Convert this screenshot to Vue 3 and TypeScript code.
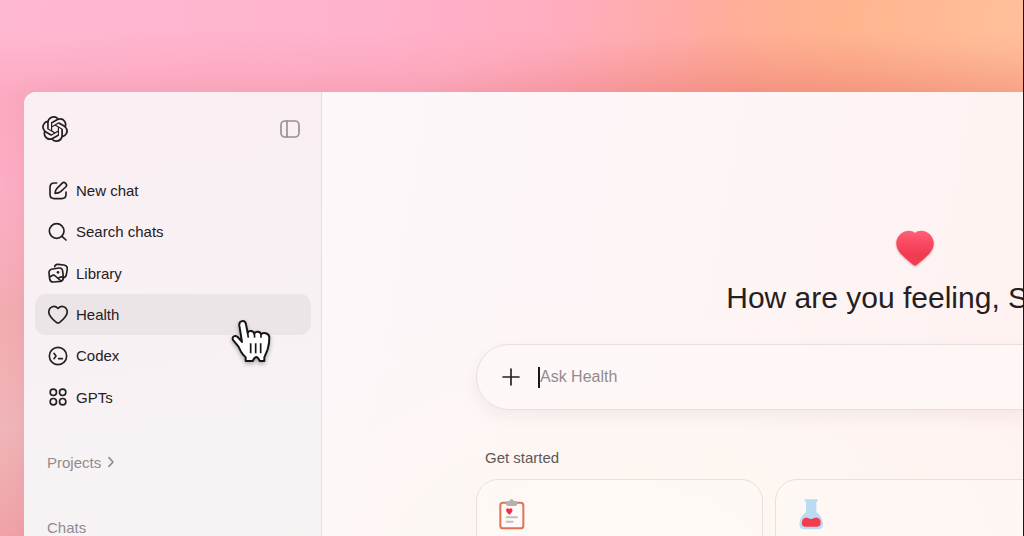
<script setup lang="ts">
import { ref } from 'vue'

type IconName = 'edit' | 'search' | 'library' | 'heart' | 'codex' | 'gpts'

interface NavItem {
  label: string
  icon: IconName
}

const navItems: NavItem[] = [
  { label: 'New chat', icon: 'edit' },
  { label: 'Search chats', icon: 'search' },
  { label: 'Library', icon: 'library' },
  { label: 'Health', icon: 'heart' },
  { label: 'Codex', icon: 'codex' },
  { label: 'GPTs', icon: 'gpts' },
]

const active = ref<string>('Health')
const question = ref<string>('')
</script>

<template>
  <div class="backdrop">
    <div class="window">
      <aside class="sidebar">
        <header class="sidebar-head">
          <a href="#" class="logo" aria-label="Home">
            <svg viewBox="0 0 24 24" width="26" height="26" fill="currentColor">
              <path d="M22.2819 9.8211a5.9847 5.9847 0 0 0-.5157-4.9108 6.0462 6.0462 0 0 0-6.5098-2.9A6.0651 6.0651 0 0 0 4.9807 4.1818a5.9847 5.9847 0 0 0-3.9977 2.9 6.0462 6.0462 0 0 0 .7427 7.0966 5.98 5.98 0 0 0 .511 4.9107 6.051 6.051 0 0 0 6.5146 2.9001A5.9847 5.9847 0 0 0 13.2599 24a6.0557 6.0557 0 0 0 5.7718-4.2058 5.9894 5.9894 0 0 0 3.9977-2.9001 6.0557 6.0557 0 0 0-.7475-7.0729zm-9.022 12.6081a4.4755 4.4755 0 0 1-2.8764-1.0408l.1419-.0804 4.7783-2.7582a.7948.7948 0 0 0 .3927-.6813v-6.7369l2.02 1.1686a.071.071 0 0 1 .038.052v5.5826a4.504 4.504 0 0 1-4.4945 4.4944zm-9.6607-4.1254a4.4708 4.4708 0 0 1-.5346-3.0137l.142.0852 4.783 2.7582a.7712.7712 0 0 0 .7806 0l5.8428-3.3685v2.3324a.0804.0804 0 0 1-.0332.0615L9.74 19.9502a4.4992 4.4992 0 0 1-6.1408-1.6464zM2.3408 7.8956a4.485 4.485 0 0 1 2.3655-1.9728V11.6a.7664.7664 0 0 0 .3879.6765l5.8144 3.3543-2.0201 1.1685a.0757.0757 0 0 1-.071 0l-4.8303-2.7865A4.504 4.504 0 0 1 2.3408 7.872zm16.5963 3.8558L13.1038 8.364 15.1192 7.2a.0757.0757 0 0 1 .071 0l4.8303 2.7913a4.4944 4.4944 0 0 1-.6765 8.1042v-5.6772a.79.79 0 0 0-.407-.667zm2.0107-3.0231l-.142-.0852-4.7735-2.7818a.7759.7759 0 0 0-.7854 0L9.409 9.2297V6.8974a.0662.0662 0 0 1 .0284-.0615l4.8303-2.7866a4.4992 4.4992 0 0 1 6.6802 4.66zM8.3065 12.863l-2.02-1.1638a.0804.0804 0 0 1-.038-.0567V6.0742a4.4992 4.4992 0 0 1 7.3757-3.4537l-.142.0805L8.704 5.459a.7948.7948 0 0 0-.3927.6813zm1.0976-2.3654l2.602-1.4998 2.6069 1.4998v2.9994l-2.5974 1.4997-2.6067-1.4997Z" />
            </svg>
          </a>
          <button type="button" class="toggle" aria-label="Close sidebar">
            <svg viewBox="0 0 60 60" width="20" height="20" class="line">
              <rect x="3" y="6" width="54" height="48" rx="12" />
              <path d="M21 6V54" />
            </svg>
          </button>
        </header>

        <nav class="nav">
          <a
            v-for="item in navItems"
            :key="item.label"
            href="#"
            class="nav-item"
            :class="{ active: item.label === active }"
            @click.prevent="active = item.label"
          >
            <svg viewBox="0 0 60 60" width="20" height="20" class="line">
              <template v-if="item.icon === 'edit'">
                <path d="M26 6H19Q6 6 6 19V40Q6 53 19 53H41Q54 53 54 40V33" />
                <path d="M21 37Q22 27 27 22L42 7A7.500 7.500 0 0 1 53 18L38 32Q32 37 21 37Z" />
              </template>
              <template v-else-if="item.icon === 'search'">
                <circle cx="26" cy="27" r="22" />
                <path d="M42 43L54 54" />
              </template>
              <template v-else-if="item.icon === 'library'">
                <path d="M20 11Q22 3 30 4L48 6Q59 8 58 18L55 35Q54 43 47 44" />
                <path d="M14 18L33 15Q43 14 44 24L46 43Q47 53 37 55L17 57Q7 58 5 48L3 30Q2 20 14 18Z" />
                <path d="M5 42L14 37Q18 35 22 39L39 54" />
                <path d="M31 46L36 43Q40 40 45 44" />
                <circle cx="30" cy="28" r="4" fill="currentColor" stroke="none" />
              </template>
              <template v-else-if="item.icon === 'heart'">
                <path d="M30 10C23 3 14 3 8 8C0 15 1 27 8 35Q14 43 25 52Q30 56 35 52Q46 43 52 35C59 27 60 15 52 8C46 3 37 3 30 10Z" />
              </template>
              <template v-else-if="item.icon === 'codex'">
                <circle cx="30" cy="30" r="26" />
                <path d="M18 22L24 30L18 38M32 38H43" />
              </template>
              <template v-else>
                <circle cx="16" cy="16" r="9.500" />
                <circle cx="44" cy="16" r="9.500" />
                <circle cx="16" cy="44" r="9.500" />
                <circle cx="44" cy="44" r="9.500" />
              </template>
            </svg>
            <span>{{ item.label }}</span>
          </a>
        </nav>

        <button type="button" class="group">
          <span>Projects</span>
          <svg viewBox="0 0 36 36" width="12" height="12" class="line">
            <path d="M12 5L24 18L12 31" />
          </svg>
        </button>
        <button type="button" class="group">Chats</button>

        <svg class="pointer" viewBox="48 84 120 132" width="40" height="44">
          <path d="M92 210V199Q83 190 78 182L70 166L55 148C48 138 60 131 68 138L77 148L81 153L73 104C71 88 90 85 93 100L98 126C100 118 115 118 118 128C121 119 136 121 138 130C144 123 162 126 163 139Q163 159 158 175L148 199V210H134Q130 199 124 198Q118 199 113 210Z" />
          <path class="creases" d="M98 126L100 140M118 128L119 140M138 130V140M107 157V187M122 157V187M137 157V187" />
        </svg>
      </aside>

      <main class="main">
        <section class="hero">
          <svg viewBox="0 0 120 112" width="40" height="37" class="heart">
            <defs>
              <linearGradient id="heartFill" x1="0" y1="0" x2="0" y2="1">
                <stop offset="0" stop-color="#fd6279" />
                <stop offset="0.35" stop-color="#fb4962" />
                <stop offset="0.7" stop-color="#ee3b50" />
                <stop offset="1" stop-color="#f53d55" />
              </linearGradient>
            </defs>
            <path fill="url(#heartFill)" d="M60 9C48-2 27 1 14 14C-2 31 1 54 16 71Q33 89 55 106Q60 110 65 106Q87 89 104 71C119 54 122 31 106 14C93 1 72-2 60 9Z" />
          </svg>
          <h1>How are you feeling, S</h1>
        </section>

        <form class="composer" @submit.prevent>
          <button type="button" class="add" aria-label="Add attachment">
            <svg viewBox="0 0 54 54" width="18" height="18" class="line">
              <path d="M27 3V51M3 27H51" />
            </svg>
          </button>
          <span class="caret"></span>
          <input v-model="question" type="text" placeholder="Ask Health" aria-label="Ask Health" />
        </form>

        <h2>Get started</h2>
        <div class="cards">
          <button type="button" class="card" aria-label="Health records">
            <svg viewBox="0 0 78 96" width="26" height="32">
              <rect x="4" y="14" width="69" height="77" rx="8" fill="#fffaf7" stroke="#df7358" stroke-width="6" />
              <path d="M21 13Q21 9 27 9H31Q38-3 45 9H49Q55 9 55 13V19Q55 24 49 24H27Q21 24 21 19Z" fill="#b6b1ad" />
              <path d="M31 33C25 27 19 33 22 40Q24 45 31 50Q38 45 40 40C42 33 36 27 31 33Z" fill="#f42e49" />
              <path d="M23 58H54M23 71H41" fill="none" stroke="#c3bfba" stroke-width="6" stroke-linecap="round" />
            </svg>
          </button>
          <button type="button" class="card" aria-label="Lab results">
            <svg viewBox="0 0 78 96" width="26" height="32">
              <path d="M22 4H56Q60 4 60 7Q60 11 55 11V42Q74 57 75 76Q75 94 60 94H19Q4 94 4 77Q5 57 24 43V11Q19 11 19 7Q19 4 22 4Z" fill="#b9dcf3" />
              <path d="M13 66Q20 55 30 60Q38 66 47 61Q60 54 67 66Q71 85 59 86H20Q8 85 13 66Z" fill="#f23d51" />
            </svg>
          </button>
          <button type="button" class="card" aria-label="More"></button>
        </div>
      </main>
    </div>
  </div>
</template>

<style>
html,
body {
  margin: 0;
  background: #f7a5ae;
}
</style>

<style scoped>
.backdrop {
  box-sizing: border-box;
  height: 100vh;
  padding: 92px 0 0 24px;
  overflow: hidden;
  border-right: 1px solid #1d1416;
  font-family: "Liberation Sans", Arial, sans-serif;
  color: #242021;
  background:
    radial-gradient(ellipse 360px 70px at 770px 105px, rgba(238, 125, 110, 0.4), transparent),
    linear-gradient(to bottom, transparent 30px, rgba(228, 110, 115, 0.18) 96px, rgba(228, 110, 115, 0.1) 260px),
    radial-gradient(ellipse 360px 190px at 1040px 20px, #ffc09b 0%, rgba(255, 182, 144, 0.8) 55%, transparent 100%),
    linear-gradient(to bottom, transparent 35%, rgba(241, 178, 178, 0.8) 58%, rgba(240, 190, 190, 0.9) 80%, #f1a8ae 100%),
    linear-gradient(97deg, #ffb8d2 0%, #ffb2cc 35%, #ffadbe 52%, #ffab9c 68%, #ffae8e 78%, #ffb691 100%);
}

.window {
  box-sizing: border-box;
  display: flex;
  width: 149%;
  min-height: 600px;
  border-radius: 12px 0 0 0;
  background:
    radial-gradient(ellipse 480px 260px at 620px 460px, rgba(253, 248, 240, 0.9), transparent),
    linear-gradient(100deg, #fdf7fa 20%, #fdf5f6 42%, #fef2f0 68%);
  box-shadow: 0 0 24px rgba(180, 60, 80, 0.08);
}

.sidebar {
  position: relative;
  box-sizing: border-box;
  flex: 0 0 298px;
  padding: 0 10px 0 11px;
  border-right: 1px solid #e5dcdf;
  border-radius: 12px 0 0 0;
  background: linear-gradient(170deg, #faeff3 0%, #f8f1f4 38%, #f7f3f4 70%, #f6f2f0 100%);
}

.sidebar-head {
  display: flex;
  align-items: center;
  justify-content: space-between;
  height: 73px;
  margin-bottom: 5px;
  padding: 0 11px 0 7px;
}

.logo,
.toggle {
  display: flex;
  color: inherit;
}

button {
  padding: 0;
  border: 0;
  background: none;
  color: inherit;
  font: inherit;
}

.toggle {
  color: #979094;
}

.line {
  fill: none;
  stroke: currentColor;
  stroke-width: 5;
  stroke-linecap: round;
  stroke-linejoin: round;
}

.nav {
  display: grid;
  grid-template-rows: repeat(6, 1fr);
  height: 248px;
  margin-bottom: 33px;
}

.nav-item {
  display: flex;
  align-items: center;
  gap: 8px;
  padding: 0 13px;
  border-radius: 11px;
  color: inherit;
  font-size: 15px;
  text-decoration: none;
}

.nav-item.active {
  background: #ece5e7;
}

.group {
  display: flex;
  align-items: center;
  gap: 4px;
  height: 22px;
  margin: 0 0 43px 12px;
  color: #918b8d;
  font-size: 15px;
}

.pointer {
  position: absolute;
  top: 227px;
  left: 207px;
  overflow: visible;
  filter: drop-shadow(0 2px 2px rgba(0, 0, 0, 0.3));
  pointer-events: none;
}

.pointer path {
  fill: #fff;
  stroke: #171516;
  stroke-width: 6;
  stroke-linejoin: round;
}

.pointer .creases {
  fill: none;
  stroke-width: 5;
}

.main {
  box-sizing: border-box;
  flex: 1;
  padding: 138px 152px 0 154px;
}

.hero {
  display: flex;
  flex-direction: column;
  align-items: center;
  padding-right: 6px;
}

.heart {
  filter: drop-shadow(0 1px 1px rgba(120, 20, 40, 0.3));
}

h1 {
  width: 378px;
  margin: 11px 0 26px;
  font-size: 30px;
  font-weight: 400;
  line-height: 40px;
  white-space: nowrap;
}

.composer {
  box-sizing: border-box;
  display: flex;
  align-items: center;
  height: 66px;
  padding: 0 25px;
  border: 1px solid #e9dfdf;
  border-radius: 33px;
  background: rgba(255, 249, 249, 0.6);
  box-shadow: 0 6px 16px rgba(90, 40, 40, 0.06);
}

.add {
  display: flex;
  margin-right: 18px;
}

.caret {
  width: 2px;
  height: 21px;
  background: #1b1718;
}

.composer input {
  flex: 1;
  min-width: 0;
  padding: 0;
  border: 0;
  outline: 0;
  background: none;
  color: inherit;
  font: inherit;
  font-size: 16px;
}

.composer input::placeholder {
  color: #938c8d;
  opacity: 1;
}

h2 {
  margin: 37px 0 10px 9px;
  color: #5d5756;
  font-size: 15px;
  font-weight: 400;
  line-height: 22px;
}

.cards {
  display: grid;
  grid-template-columns: repeat(3, 1fr);
  gap: 12px;
}

.card {
  display: flex;
  align-items: flex-start;
  height: 150px;
  padding: 18px 22px;
  border: 1px solid #eadfdd;
  border-radius: 22px;
  background: rgba(255, 252, 248, 0.35);
}
</style>
